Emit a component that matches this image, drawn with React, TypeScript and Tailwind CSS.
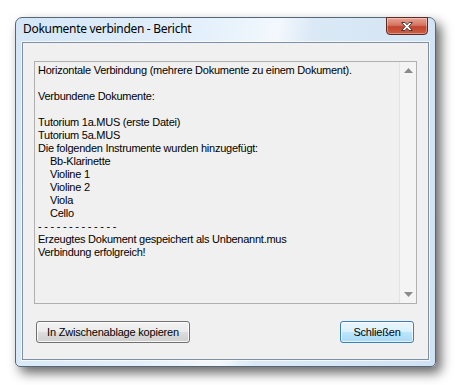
import React from "react";

const lines: { t: string; indent?: boolean }[] = [
  { t: "Horizontale Verbindung (mehrere Dokumente zu einem Dokument)." },
  { t: "\u00a0" },
  { t: "Verbundene Dokumente:" },
  { t: "\u00a0" },
  { t: "Tutorium 1a.MUS (erste Datei)" },
  { t: "Tutorium 5a.MUS" },
  { t: "Die folgenden Instrumente wurden hinzugefügt:" },
  { t: "Bb-Klarinette", indent: true },
  { t: "Violine 1", indent: true },
  { t: "Violine 2", indent: true },
  { t: "Viola", indent: true },
  { t: "Cello", indent: true },
  { t: "- - - - - - - - - - - - -" },
  { t: "Erzeugtes Dokument gespeichert als Unbenannt.mus" },
  { t: "Verbindung erfolgreich!" },
];

export default function App() {
  return (
    <div className="w-[463px] h-[385px] bg-white pt-[17px] pl-[15px] overflow-hidden">
      <div className="w-[421px] h-[350px] flex flex-col rounded-t-[7px] rounded-b-[5px] border border-[#56677a] shadow-[5px_6px_12px_rgba(0,0,0,0.6)] bg-[linear-gradient(100deg,#d3e5f6_0%,#e4f0fb_40%,#f3f8fd_55%,#dbe9f6_62%,#cfe2f4_100%)]">
        <div className="h-[24px] flex items-start justify-between pl-[7px] pr-[7px]">
          <div className="pt-[3px] text-[12px] leading-[16px] tracking-[-0.3px] text-black [font-family:'Noto_Sans',sans-serif]">
            Dokumente verbinden - Bericht
          </div>
          <div className="w-[42px] h-[18px] mt-[-1px] rounded-b-[4px] border border-[#5b2a22] bg-[linear-gradient(#e8a495_0%,#d67461_45%,#c2452e_55%,#cd5d45_100%)] shadow-[inset_0_0_0_1px_rgba(255,255,255,0.35)] flex items-center justify-center">
            <svg width="14" height="11" viewBox="0 0 14 11">
              <path
                d="M1.5 1.5 L5 1.5 L7 3.8 L9 1.5 L12.5 1.5 L8.8 5.5 L12.5 9.5 L9 9.5 L7 7.2 L5 9.5 L1.5 9.5 L5.2 5.5 Z"
                fill="#ffffff"
                stroke="#4a3a3a"
                strokeWidth="1"
                strokeLinejoin="round"
              />
            </svg>
          </div>
        </div>
        <div className="flex-1 mx-[6px] mb-[6px] border border-[#7f90a3] bg-[#f0f0f0] flex flex-col shadow-[0_0_0_1px_rgba(255,255,255,0.7)]">
          <div className="pl-[11px] pt-[18px]">
            <div className="w-[383px] h-[243px] border border-[#b0b0b0] bg-[#f0f0f0] flex">
              <div className="flex-1 pl-[3px] pt-[2px] text-[11px] leading-[13px] tracking-[-0.25px] text-black [font-family:'Liberation_Sans',Arial,sans-serif] whitespace-pre">
                {lines.map((l, i) => (
                  <div key={i} className={l.indent ? "pl-[12px]" : ""}>
                    {l.t}
                  </div>
                ))}
              </div>
              <div className="w-[17px] h-full border-l border-[#e3e3e3] bg-[#f4f4f4] flex flex-col items-center justify-between py-[6px]">
                <svg width="9" height="5" viewBox="0 0 9 5">
                  <path d="M0 5 L4.5 0 L9 5 Z" fill="#8a8a8a" />
                </svg>
                <svg width="9" height="5" viewBox="0 0 9 5">
                  <path d="M0 0 L4.5 5 L9 0 Z" fill="#8a8a8a" />
                </svg>
              </div>
            </div>
          </div>
          <div className="flex justify-between pl-[13px] pr-[14px] pt-[17px]">
            <button className="w-[154px] h-[22px] rounded-[3px] border border-[#707070] bg-[linear-gradient(#f2f2f2_0%,#ebebeb_50%,#dddddd_50%,#cfcfcf_100%)] shadow-[inset_0_0_0_1px_rgba(255,255,255,0.8)] text-[11px] tracking-[-0.2px] text-black [font-family:'Liberation_Sans',Arial,sans-serif]">
              In Zwischenablage kopieren
            </button>
            <button className="w-[74px] h-[22px] rounded-[3px] border border-[#3c7fb1] bg-[linear-gradient(#eaf6fd_0%,#d9f0fc_50%,#bee6fd_50%,#a7d9f5_100%)] shadow-[inset_0_0_0_1px_rgba(255,255,255,0.7)] text-[11px] tracking-[-0.2px] text-black [font-family:'Liberation_Sans',Arial,sans-serif]">
              Schließen
            </button>
          </div>
        </div>
      </div>
    </div>
  );
}
